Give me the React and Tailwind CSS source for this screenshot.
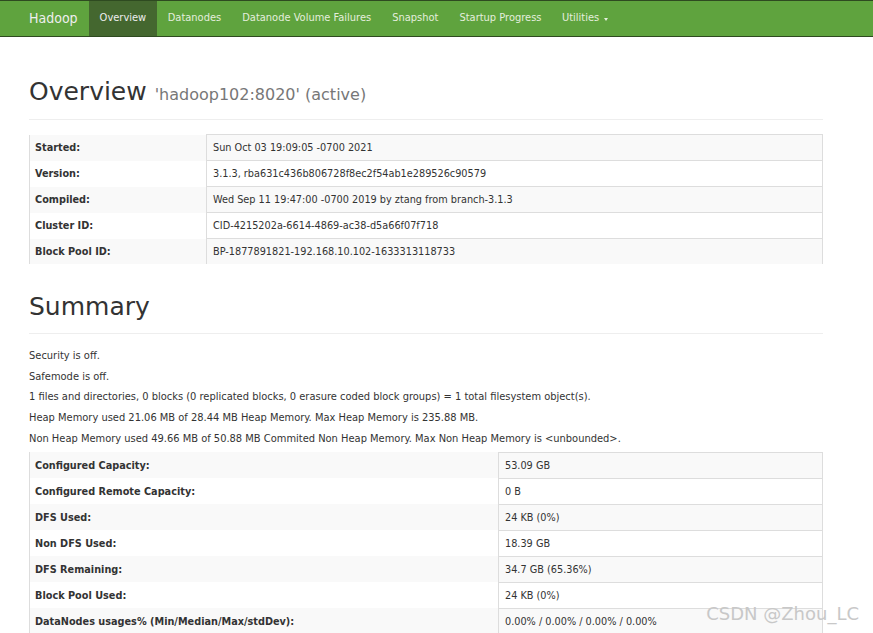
import React from 'react';

const navLinks = ['Datanodes', 'Datanode Volume Failures', 'Snapshot', 'Startup Progress'];

const overview = [
  ['Started:', 'Sun Oct 03 19:09:05 -0700 2021'],
  ['Version:', '3.1.3, rba631c436b806728f8ec2f54ab1e289526c90579'],
  ['Compiled:', 'Wed Sep 11 19:47:00 -0700 2019 by ztang from branch-3.1.3'],
  ['Cluster ID:', 'CID-4215202a-6614-4869-ac38-d5a66f07f718'],
  ['Block Pool ID:', 'BP-1877891821-192.168.10.102-1633313118733'],
];

const summary = [
  ['Configured Capacity:', '53.09 GB'],
  ['Configured Remote Capacity:', '0 B'],
  ['DFS Used:', '24 KB (0%)'],
  ['Non DFS Used:', '18.39 GB'],
  ['DFS Remaining:', '34.7 GB (65.36%)'],
  ['Block Pool Used:', '24 KB (0%)'],
  ['DataNodes usages% (Min/Median/Max/stdDev):', '0.00% / 0.00% / 0.00% / 0.00%'],
  ['Live Nodes', '1 (Decommissioned: 0, In Maintenance: 0)'],
];

const notes = [
  'Security is off.',
  'Safemode is off.',
  '1 files and directories, 0 blocks (0 replicated blocks, 0 erasure coded block groups) = 1 total filesystem object(s).',
  'Heap Memory used 21.06 MB of 28.44 MB Heap Memory. Max Heap Memory is 235.88 MB.',
  'Non Heap Memory used 49.66 MB of 50.88 MB Commited Non Heap Memory. Max Non Heap Memory is <unbounded>.',
];

const InfoTable = ({ rows, labelWidth }) => (
  <table className="w-full border-x border-[#ddd] border-collapse font-['DejaVu_Sans_Condensed','DejaVu_Sans',sans-serif] text-[10.8px] text-[#333]">
    <tbody>
      {rows.map(([k, v], i) => (
        <tr key={k} className={i % 2 === 0 ? 'bg-[#f9f9f9]' : 'bg-white'}>
          <th className={`${labelWidth} border-t border-[#ddd] first:border-t-0 px-[5px] py-[5px] text-left font-bold leading-[15px]`}>
            {k}
          </th>
          <td className="border-t border-l border-[#ddd] px-[6px] py-[5px] leading-[15px]">{v}</td>
        </tr>
      ))}
    </tbody>
  </table>
);

const App = () => {
  return (
    <div className="relative h-[633px] overflow-hidden bg-white font-['DejaVu_Sans',sans-serif] text-[#333]">
      <header className="h-[37px] border-y border-[#2e4a20] bg-[#5fa33e]">
        <div className="flex h-full items-stretch px-[18px] font-['DejaVu_Sans_Condensed','DejaVu_Sans',sans-serif]">
          <span className="flex items-center px-[11px] text-[14px] text-[#eee]">Hadoop</span>
          <span className="flex items-center bg-[#44672f] px-[11px] text-[11px] text-[#eee]">Overview</span>
          {navLinks.map((l) => (
            <span key={l} className="flex items-center px-[10.5px] text-[11px] text-[#e4eedd]">{l}</span>
          ))}
          <span className="flex items-center gap-[5px] px-[10px] text-[11px] text-[#e4eedd]">
            Utilities
            <span className="mt-[2px] block h-0 w-0 border-x-[2px] border-t-[3px] border-x-transparent border-t-[#e4eedd]" />
          </span>
        </div>
      </header>

      <main className="w-[794px] ml-[29px]">
        <div className="mt-[40px] border-b border-[#eee] pb-[9px]">
          <h1 className="text-[25px] leading-[30px] text-[#333]">
            Overview <small className="text-[16px] text-[#777]">'hadoop102:8020' (active)</small>
          </h1>
        </div>
        <div className="mt-[14px]">
          <InfoTable rows={overview} labelWidth="w-[177px]" />
        </div>

        <div className="mt-[28px] border-b border-[#eee] pb-[11px]">
          <h1 className="text-[25px] leading-[30px] text-[#333]">Summary</h1>
        </div>

        <div className="mt-[14px] font-['DejaVu_Sans_Condensed','DejaVu_Sans',sans-serif] text-[11px] leading-[15px]">
          {notes.map((n) => (
            <p key={n} className="mb-[5.7px]">{n}</p>
          ))}
        </div>
        <div className="mt-[6px]">
          <InfoTable rows={summary} labelWidth="w-[469px]" />
        </div>
      </main>

      <div className="absolute right-[14px] top-[600px] font-['DejaVu_Sans',sans-serif] text-[18px] text-[#c8c8c8]">
        CSDN @Zhou_LC
      </div>
    </div>
  );
};

export default App;
